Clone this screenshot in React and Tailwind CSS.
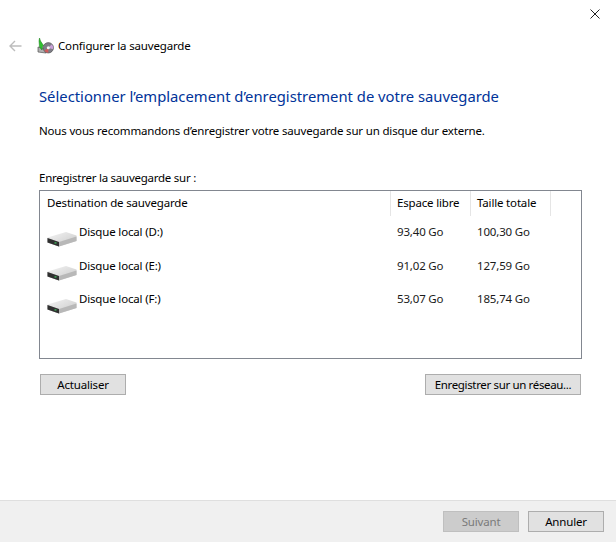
const FONT = "font-['Noto_Sans','Open_Sans',sans-serif]";

function Drive() {
  return (
    <svg width="30" height="18" viewBox="0 0 30 18" className="shrink-0">
      <defs>
        <linearGradient id="top" x1="0" y1="0" x2="1" y2="1">
          <stop offset="0" stopColor="#f4f4f4" />
          <stop offset="1" stopColor="#c8c8c8" />
        </linearGradient>
      </defs>
      <path d="M0.5 7.5 L19 2 L29.5 5.5 L29.5 11 L12 16.5 L0.5 12.5 Z" fill="url(#top)" />
      <path d="M0.5 8 L12 12 L29.5 6.5 L29.5 11 L12 16.5 L0.5 12.5 Z" fill="#b8b8b8" />
      <path d="M0.5 8 L12 12 L12 16.5 L0.5 12.5 Z" fill="#303030" />
      <rect x="7.5" y="12.2" width="2" height="1.4" fill="#3fae5a" />
    </svg>
  );
}

function BackupIcon() {
  return (
    <svg width="17" height="17" viewBox="0 0 17 17" className="shrink-0">
      <path d="M1 9 L1 14 L9 15 L9 11 Z" fill="#b0b0b0" stroke="#555" strokeWidth="0.7" />
      <circle cx="11.3" cy="9.8" r="5.2" fill="#7d7d86" stroke="#4a4a4a" strokeWidth="0.6" />
      <path d="M11.3 9.8 L14.8 6.3 A5 5 0 0 1 15.9 11.3 Z" fill="#c9a0d8" />
      <path d="M11.3 9.8 L7.3 12.8 A5 5 0 0 0 11.3 14.8 Z" fill="#d05a5a" />
      <circle cx="11.3" cy="9.8" r="1.5" fill="#f4f4f4" />
      <path d="M2.5 0 L3.5 3 L6.5 7.5 L5.5 8 L5 12 L2.5 9 L2 3 Z" fill="#2fc12f" stroke="#147a14" strokeWidth="0.5" />
    </svg>
  );
}

const rows = [
  ["Disque local (D:)", "93,40 Go", "100,30 Go"],
  ["Disque local (E:)", "91,02 Go", "127,59 Go"],
  ["Disque local (F:)", "53,07 Go", "185,74 Go"],
];

function Btn({ children, className = "", disabled }) {
  return (
    <div
      className={`h-[21px] flex items-center justify-center border text-[11.5px] leading-none tracking-[-0.17px] ${
        disabled
          ? "bg-[#cccccc] border-[#bfbfbf] text-[#7a7a7a]"
          : "bg-[#e1e1e1] border-[#adadad] text-black"
      } ${className}`}
    >
      {children}
    </div>
  );
}

export default function App() {
  return (
    <div className={`${FONT} w-[616px] h-[542px] bg-white text-black flex flex-col overflow-hidden`}>
      <div className="h-[9px] flex justify-end pr-[16px] pt-[9px]">
        <svg width="10" height="10" viewBox="0 0 10 10" className="shrink-0">
          <path d="M0.5 0.5 L9.5 9.5 M9.5 0.5 L0.5 9.5" stroke="#222" strokeWidth="1" />
        </svg>
      </div>
      <div className="flex items-center h-[18px] mt-[28px] pl-[9px]">
        <svg width="13" height="12" viewBox="0 0 13 12" className="shrink-0">
          <path d="M1 6 H12.5 M6 1 L1 6 L6 11" fill="none" stroke="#bdbdbd" strokeWidth="1.4" />
        </svg>
        <div className="ml-[15px]"><BackupIcon /></div>
        <span className="ml-[4px] text-[11.5px] leading-none tracking-[-0.17px]">Configurer la sauvegarde</span>
      </div>

      <div className="flex-1 flex flex-col pl-[39px] pr-[34px]">
        <h1 className="mt-[31px] h-[20px] text-[14.8px] leading-[20px] font-normal text-[#003399] whitespace-nowrap">
          Sélectionner l’emplacement d’enregistrement de votre sauvegarde
        </h1>
        <p className="mt-[17px] h-[16px] text-[11.5px] leading-[16px] whitespace-nowrap tracking-[-0.17px]">
          Nous vous recommandons d’enregistrer votre sauvegarde sur un disque dur externe.
        </p>
        <p className="mt-[31px] h-[16px] text-[11.5px] leading-[16px] tracking-[-0.25px]">Enregistrer la sauvegarde sur :</p>

        <div className="mt-[4px] w-[543px] h-[169px] border border-[#828790] text-[11.5px] tracking-[-0.17px]">
          <div className="flex h-[25px]">
            <div className="w-[351px] pl-[7px] pt-[4px] leading-[16px] border-r border-[#e5e5e5]">Destination de sauvegarde</div>
            <div className="w-[80px] pl-[6px] pt-[4px] leading-[16px] border-r border-[#e5e5e5]">Espace libre</div>
            <div className="w-[80px] pl-[6px] pt-[4px] leading-[16px] border-r border-[#e5e5e5]">Taille totale</div>
          </div>
          <div className="flex flex-col gap-[1.5px] mt-[7px]">
            {rows.map((r) => (
              <div key={r[0]} className="flex h-[32px] text-[#1a1a1a]">
                <div className="w-[351px] flex pl-[7px]">
                  <div className="mt-[7px]"><Drive /></div>
                  <span className="ml-[2px] leading-[16px] mt-[1px] text-black">{r[0]}</span>
                </div>
                <div className="w-[80px] pl-[6px] leading-[16px] mt-[1px]">{r[1]}</div>
                <div className="w-[80px] pl-[6px] leading-[16px] mt-[1px]">{r[2]}</div>
              </div>
            ))}
          </div>
        </div>

        <div className="mt-[15px] w-[542px] pl-[1px] flex justify-between">
          <Btn className="w-[86px]">Actualiser</Btn>
          <Btn className="w-[156px] tracking-[-0.35px]">Enregistrer sur un réseau...</Btn>
        </div>
      </div>

      <div className="h-[42px] bg-[#f0f0f0] border-t border-[#dfdfdf] flex justify-end gap-[9px] pr-[12px] pt-[10px]">
        <Btn disabled className="w-[76px]">Suivant</Btn>
        <Btn className="w-[76px]">Annuler</Btn>
      </div>
    </div>
  );
}
